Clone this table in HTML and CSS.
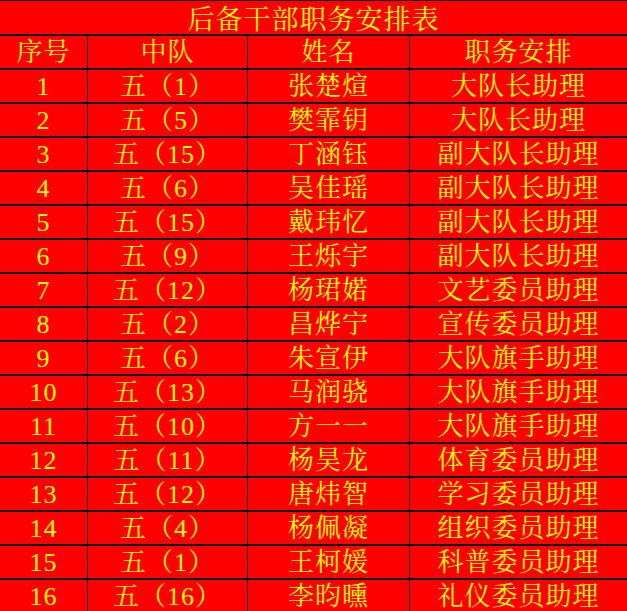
FILE: index.html
```html
<!DOCTYPE html>
<html lang="zh-CN">
<head>
<meta charset="utf-8">
<title>后备干部职务安排表</title>
<link rel="stylesheet" href="styles.css">
</head>
<body>
<div class="sheet">
  <div class="cell title">后备干部职务安排表</div>
  <div class="cell">序号</div><div class="cell">中队</div><div class="cell">姓名</div><div class="cell">职务安排</div>
  <div class="cell">1</div><div class="cell">五（1）</div><div class="cell">张楚煊</div><div class="cell">大队长助理</div>
  <div class="cell">2</div><div class="cell">五（5）</div><div class="cell">樊霏钥</div><div class="cell">大队长助理</div>
  <div class="cell">3</div><div class="cell">五（15）</div><div class="cell">丁涵钰</div><div class="cell">副大队长助理</div>
  <div class="cell">4</div><div class="cell">五（6）</div><div class="cell">吴佳瑶</div><div class="cell">副大队长助理</div>
  <div class="cell">5</div><div class="cell">五（15）</div><div class="cell">戴玮忆</div><div class="cell">副大队长助理</div>
  <div class="cell">6</div><div class="cell">五（9）</div><div class="cell">王烁宇</div><div class="cell">副大队长助理</div>
  <div class="cell">7</div><div class="cell">五（12）</div><div class="cell">杨珺婼</div><div class="cell">文艺委员助理</div>
  <div class="cell">8</div><div class="cell">五（2）</div><div class="cell">昌烨宁</div><div class="cell">宣传委员助理</div>
  <div class="cell">9</div><div class="cell">五（6）</div><div class="cell">朱宣伊</div><div class="cell">大队旗手助理</div>
  <div class="cell">10</div><div class="cell">五（13）</div><div class="cell">马润骁</div><div class="cell">大队旗手助理</div>
  <div class="cell">11</div><div class="cell">五（10）</div><div class="cell">方一一</div><div class="cell">大队旗手助理</div>
  <div class="cell">12</div><div class="cell">五（11）</div><div class="cell">杨昊龙</div><div class="cell">体育委员助理</div>
  <div class="cell">13</div><div class="cell">五（12）</div><div class="cell">唐炜智</div><div class="cell">学习委员助理</div>
  <div class="cell">14</div><div class="cell">五（4）</div><div class="cell">杨佩凝</div><div class="cell">组织委员助理</div>
  <div class="cell">15</div><div class="cell">五（1）</div><div class="cell">王柯媛</div><div class="cell">科普委员助理</div>
  <div class="cell">16</div><div class="cell">五（16）</div><div class="cell">李昀曛</div><div class="cell">礼仪委员助理</div>
</div>
</body>
</html>
```
FILE: styles.css
```css
html, body {
  margin: 0;
  padding: 0;
  background: #ff0000;
}
.sheet {
  display: grid;
  grid-template-columns: 87px 159px 161px 217px;
  grid-template-rows: 33px;
  grid-auto-rows: 32px;
  column-gap: 1px;
  row-gap: 2px;
  padding-top: 1px;
  background: #000;
  width: 627px;
}
.cell {
  background: #ff0000;
  color: #ffff00;
  font-family: "Liberation Serif", "Noto Serif CJK SC", "Noto Sans CJK SC", serif;
  font-size: 26px;
  line-height: 32px;
  letter-spacing: 1px;
  display: flex;
  align-items: center;
  justify-content: center;
  padding-top: 2px;
  box-sizing: border-box;
  white-space: nowrap;
}
.title {
  grid-column: 1 / -1;
  font-size: 27px;
  padding-top: 4px;
}
```
